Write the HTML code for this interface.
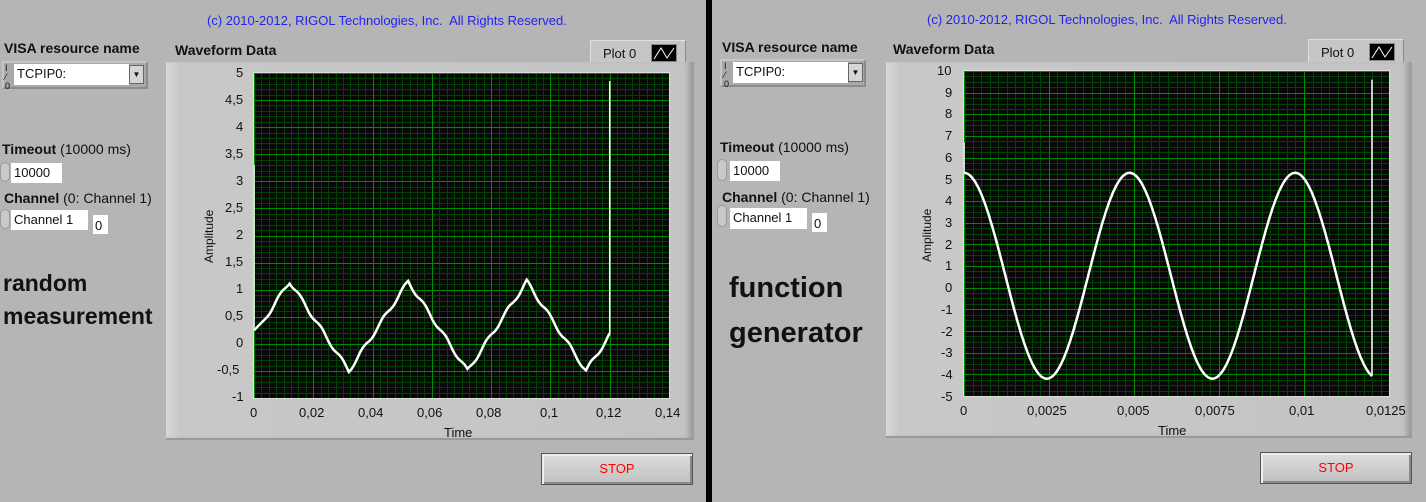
<!DOCTYPE html>
<html><head><meta charset="utf-8"><style>
*{margin:0;padding:0;box-sizing:border-box}
body{width:1426px;height:502px;background:#b5b5b5;position:relative;overflow:hidden;font-family:"Liberation Sans","DejaVu Sans",sans-serif;font-size:13px;color:#111}
.a{position:absolute;white-space:nowrap}
.copy{color:#2323f0;font-size:13px}
.b{font-weight:bold;font-size:14px}
.frame{position:absolute;background:linear-gradient(90deg,#d8d8d8 0,#c8c8c8 14px,#c4c4c4 100%);border-bottom:2px solid #999;box-shadow:inset -8px 0 6px -3px #999}
.fld{position:absolute;background:#fff;font-size:13px;padding:2px 3px;line-height:15px}
.dd{position:absolute;background:#a9a9a9;border:2px solid #c6c6c6;border-right-color:#8c8c8c;border-bottom-color:#8c8c8c}
.spin{position:absolute;width:10px;background:#c9c9c9;border-radius:5px;border:1px solid #999}
.stop{position:absolute;width:152px;height:32px;background:linear-gradient(#dedede,#c0c0c0);border:1px solid #555;box-shadow:inset 2px 2px 0 #eee,inset -2px -2px 0 #888;color:#f00;text-align:center;line-height:30px;font-size:13px}
.big{font-weight:bold;color:#111}
.tk{position:absolute;font-size:13px;color:#111}
.leg{position:absolute;width:96px;height:26px;background:#c6c6c6;border:1px solid #e0e0e0;border-right-color:#888;border-bottom-color:#888;font-size:13px;padding:5px 0 0 12px}
.leg i{position:absolute;right:8px;top:3px;width:26px;height:18px;background:#000;border:1px solid #888}
</style></head><body>
<div class="a" style="left:706px;top:0;width:6px;height:502px;background:#000"></div>

<!-- LEFT -->
<div class="a copy" style="left:207px;top:13px">(c) 2010-2012, RIGOL Technologies, Inc.&nbsp; All Rights Reserved.</div>
<div class="a b" style="left:4px;top:40px">VISA resource name</div>
<div class="dd" style="left:2px;top:61px;width:146px;height:28px"></div>
<div class="a" style="left:5px;top:64px;font-size:9px;line-height:9px">I<br>⁄<br>0</div>
<div class="fld" style="left:14px;top:64px;width:115px;height:21px">TCPIP0:</div>
<div class="a" style="left:129px;top:65px;width:15px;height:19px;background:#d6d6d6;border:1px solid #666;font-size:8px;text-align:center;line-height:17px">▼</div>
<div class="a" style="left:2px;top:141px;font-size:14px"><b>Timeout</b> (10000 ms)</div>
<div class="spin" style="left:0;top:162px;height:20px"></div>
<div class="fld" style="left:11px;top:163px;width:51px;height:20px">10000</div>
<div class="a" style="left:4px;top:190px;font-size:14px"><b>Channel</b> (0: Channel 1)</div>
<div class="spin" style="left:0;top:209px;height:20px"></div>
<div class="fld" style="left:11px;top:210px;width:77px;height:20px">Channel 1</div>
<div class="fld" style="left:93px;top:215px;width:15px;height:19px;padding:3px 2px">0</div>
<div class="a big" style="left:3px;top:267px;font-size:23px;line-height:33px">random<br>measurement</div>
<div class="a b" style="left:175px;top:42px">Waveform Data</div>
<div class="leg" style="left:590px;top:40px">Plot 0<i><svg width="24" height="16"><polyline points="2,14 9,3 15,13 22,3" fill="none" stroke="#fff" stroke-width="1"/></svg></i></div>
<div class="frame" style="left:166px;top:62px;width:528px;height:378px"></div>
<svg class="a" id="c1" style="left:253px;top:72px" width="417" height="327"></svg>
<div class="a" style="left:202px;top:263px;transform:rotate(-90deg);transform-origin:0 0;font-size:12px">Amplitude</div>
<div class="a" style="left:444px;top:425px;font-size:13px">Time</div>
<div class="stop" style="left:541px;top:453px">STOP</div>

<!-- RIGHT -->
<div class="a copy" style="left:927px;top:12px">(c) 2010-2012, RIGOL Technologies, Inc.&nbsp; All Rights Reserved.</div>
<div class="a b" style="left:722px;top:39px">VISA resource name</div>
<div class="dd" style="left:720px;top:59px;width:146px;height:28px"></div>
<div class="a" style="left:724px;top:62px;font-size:9px;line-height:9px">I<br>⁄<br>0</div>
<div class="fld" style="left:733px;top:62px;width:115px;height:21px">TCPIP0:</div>
<div class="a" style="left:848px;top:63px;width:15px;height:19px;background:#d6d6d6;border:1px solid #666;font-size:8px;text-align:center;line-height:17px">▼</div>
<div class="a" style="left:720px;top:139px;font-size:14px"><b>Timeout</b> (10000 ms)</div>
<div class="spin" style="left:717px;top:159px;height:22px"></div>
<div class="fld" style="left:730px;top:161px;width:50px;height:20px">10000</div>
<div class="a" style="left:722px;top:189px;font-size:14px"><b>Channel</b> (0: Channel 1)</div>
<div class="spin" style="left:717px;top:205px;height:22px"></div>
<div class="fld" style="left:730px;top:208px;width:77px;height:21px">Channel 1</div>
<div class="fld" style="left:812px;top:213px;width:15px;height:19px;padding:3px 2px">0</div>
<div class="a big" style="left:729px;top:266px;font-size:29px;line-height:45px">function<br>generator</div>
<div class="a b" style="left:893px;top:41px">Waveform Data</div>
<div class="leg" style="left:1308px;top:39px">Plot 0<i><svg width="24" height="16"><polyline points="2,14 9,3 15,13 22,3" fill="none" stroke="#fff" stroke-width="1"/></svg></i></div>
<div class="frame" style="left:886px;top:62px;width:526px;height:376px"></div>
<svg class="a" id="c2" style="left:963px;top:70px" width="427" height="327"></svg>
<div class="a" style="left:920px;top:262px;transform:rotate(-90deg);transform-origin:0 0;font-size:12px">Amplitude</div>
<div class="a" style="left:1158px;top:423px;font-size:13px">Time</div>
<div class="stop" style="left:1260px;top:452px">STOP</div>

<!-- tick labels left -->
<div class="tk" style="left:236px;top:65px">5</div>
<div class="tk" style="left:225px;top:92px">4,5</div>
<div class="tk" style="left:236px;top:119px">4</div>
<div class="tk" style="left:225px;top:146px">3,5</div>
<div class="tk" style="left:236px;top:173px">3</div>
<div class="tk" style="left:225px;top:200px">2,5</div>
<div class="tk" style="left:236px;top:227px">2</div>
<div class="tk" style="left:225px;top:254px">1,5</div>
<div class="tk" style="left:236px;top:281px">1</div>
<div class="tk" style="left:225px;top:308px">0,5</div>
<div class="tk" style="left:236px;top:335px">0</div>
<div class="tk" style="left:217px;top:362px">-0,5</div>
<div class="tk" style="left:232px;top:389px">-1</div>
<div class="tk" style="left:250px;top:405px">0</div>
<div class="tk" style="left:299px;top:405px">0,02</div>
<div class="tk" style="left:358px;top:405px">0,04</div>
<div class="tk" style="left:417px;top:405px">0,06</div>
<div class="tk" style="left:476px;top:405px">0,08</div>
<div class="tk" style="left:540px;top:405px">0,1</div>
<div class="tk" style="left:596px;top:405px">0,12</div>
<div class="tk" style="left:655px;top:405px">0,14</div>
<!-- tick labels right -->
<div class="tk" style="left:937px;top:63px">10</div>
<div class="tk" style="left:945px;top:85px">9</div>
<div class="tk" style="left:945px;top:106px">8</div>
<div class="tk" style="left:945px;top:128px">7</div>
<div class="tk" style="left:945px;top:150px">6</div>
<div class="tk" style="left:945px;top:172px">5</div>
<div class="tk" style="left:945px;top:193px">4</div>
<div class="tk" style="left:945px;top:215px">3</div>
<div class="tk" style="left:945px;top:237px">2</div>
<div class="tk" style="left:945px;top:258px">1</div>
<div class="tk" style="left:945px;top:280px">0</div>
<div class="tk" style="left:941px;top:302px">-1</div>
<div class="tk" style="left:941px;top:324px">-2</div>
<div class="tk" style="left:941px;top:345px">-3</div>
<div class="tk" style="left:941px;top:367px">-4</div>
<div class="tk" style="left:941px;top:389px">-5</div>
<div class="tk" style="left:960px;top:403px">0</div>
<div class="tk" style="left:1027px;top:403px">0,0025</div>
<div class="tk" style="left:1117px;top:403px">0,005</div>
<div class="tk" style="left:1195px;top:403px">0,0075</div>
<div class="tk" style="left:1289px;top:403px">0,01</div>
<div class="tk" style="left:1366px;top:403px">0,0125</div>

<script>
function chart(id,W,H,xmax,xmaj,xsub,ymin,ymax,ymaj,ysub,f,tend,vtop,vleft){
 var s=document.getElementById(id),o='<rect width="'+W+'" height="'+H+'" fill="#080808"/>';
 var X=function(t){return t/xmax*(W-2)+1},Y=function(v){return (ymax-v)/(ymax-ymin)*(H-2)+1};
 var nx=Math.round(xmax/xmaj)*xsub,maj='',min='';
 for(var i=0;i<=nx;i++){var x=Math.round(X(i*xmaj/xsub))+.5;var l='<line x1="'+x+'" y1="0" x2="'+x+'" y2="'+H+'"/>';if(i%xsub)min+=l;else maj+=l;}
 var ny=Math.round((ymax-ymin)/ymaj)*ysub;
 for(i=0;i<=ny;i++){var y=Math.round(Y(ymin+i*ymaj/ysub))+.5;var l='<line x1="0" y1="'+y+'" x2="'+W+'" y2="'+y+'"/>';if(i%ysub)min+=l;else maj+=l;}
 o+='<g stroke="#004200">'+min+'</g><g stroke="#008a00">'+maj+'</g>';
 var p=[];for(i=0;i<=600;i++){var t=tend*i/600;p.push(X(t).toFixed(1)+','+Y(f(t)).toFixed(1));}
 o+='<polyline points="'+p.join(' ')+'" fill="none" stroke="#fff" stroke-width="2.5"/>';
 o+='<line x1="'+X(tend)+'" y1="'+Y(f(tend))+'" x2="'+X(tend)+'" y2="'+Y(vtop)+'" stroke="#fff" stroke-width="1.5"/>';
 o+='<line x1="1" y1="'+Y(vleft[0])+'" x2="1" y2="'+Y(vleft[1])+'" stroke="#fff" stroke-width="1.5"/>';
 o+='<rect x="0.5" y="0.5" width="'+(W-1)+'" height="'+(H-1)+'" fill="none" stroke="#ddd"/>';
 s.innerHTML=o;
}
function tri(t){var P=0.04,ph=((t-0.012)%P+P)%P/P;var v=ph<0.5?1.15-1.65*ph*2:-0.5+1.65*(ph-0.5)*2;return v+0.04*Math.sin(t*900);}
chart('c1',417,327,0.14,0.02,8,-1,5,0.5,5,function(t){return t<0.004?0.25+(tri(0.004)-0.25)*t/0.004:tri(t);},0.12,4.85,[3.3,0.3]);
chart('c2',427,327,0.0125,0.0025,10,-5,10,1,4,function(t){return 0.55+4.75*Math.cos(2*Math.PI*t/0.00487);},0.012,9.6,[6.7,5.3]);
</script>
</body></html>
